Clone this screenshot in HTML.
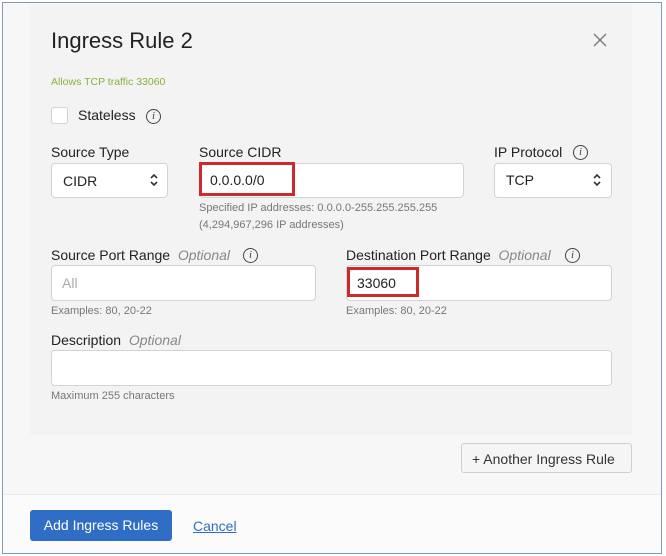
<!DOCTYPE html>
<html><head><style>
*{margin:0;padding:0;box-sizing:border-box}
body{width:666px;height:556px;background:#fff;font-family:"Liberation Sans",sans-serif;position:relative;overflow:hidden;color:#222}
.a{position:absolute;white-space:nowrap}
.frame{position:absolute;left:2px;top:2px;width:660px;height:552px;border:1px solid #8597b8;background:#f7f7f7}
.card{position:absolute;left:30px;top:5px;width:602px;height:430px;background:#f3f3f3}
.foot{position:absolute;left:3px;top:494px;width:658px;height:59px;background:#fbfbfb;border-top:1px solid #e9e9e9}
.in{position:absolute;background:#fff;border:1px solid #d3d3d3;border-radius:4px}
.lbl{font-size:14px;color:#222}
.opt{font-style:italic;color:#888}
.help{font-size:11px;color:#777}
.info{position:absolute;width:15px;height:15px;border:1.2px solid #444;border-radius:50%;font-size:10px;font-style:italic;font-family:"Liberation Serif",serif;text-align:center;line-height:13px;color:#333}
.red{position:absolute;border:3px solid #cc2a2e}
</style></head><body>
<div class="frame"></div>
<div class="card"></div>
<div class="foot"></div>

<div class="a" style="left:51px;top:28px;font-size:22px;color:#222">Ingress Rule 2</div>
<svg class="a" style="left:593px;top:33px" width="14" height="14"><path d="M1 1L13 13M13 1L1 13" stroke="#777" stroke-width="1.3"/></svg>
<div class="a" style="left:51px;top:76px;font-size:10.5px;color:#86b33f">Allows TCP traffic 33060</div>

<div class="in" style="left:51px;top:107px;width:17px;height:17px;border-radius:3px"></div>
<div class="a lbl" style="left:78px;top:107px">Stateless</div>
<div class="info" style="left:146px;top:109px">i</div>

<div class="a lbl" style="left:51px;top:144px">Source Type</div>
<div class="a lbl" style="left:199px;top:144px">Source CIDR</div>
<div class="a lbl" style="left:494px;top:144px">IP Protocol</div>
<div class="info" style="left:573px;top:145px">i</div>

<div class="in" style="left:51px;top:163px;width:117px;height:35px"></div>
<div class="a" style="left:63px;top:173px;font-size:14px">CIDR</div>
<svg class="a" style="left:149px;top:172px" width="10" height="16"><path d="M2 6L5 3L8 6M2 10L5 13L8 10" stroke="#333" stroke-width="1.6" fill="none"/></svg>
<div class="in" style="left:199px;top:163px;width:265px;height:35px"></div>
<div class="red" style="left:199px;top:162px;width:96px;height:34px"></div>
<div class="a" style="left:210px;top:172px;font-size:14px">0.0.0.0/0</div>
<div class="in" style="left:494px;top:163px;width:118px;height:35px"></div>
<div class="a" style="left:506px;top:172px;font-size:14px">TCP</div>
<svg class="a" style="left:592px;top:172px" width="10" height="16"><path d="M2 6L5 3L8 6M2 10L5 13L8 10" stroke="#333" stroke-width="1.6" fill="none"/></svg>
<div class="a help" style="left:199px;top:202px">Specified IP addresses: 0.0.0.0-255.255.255.255</div>
<div class="a help" style="left:199px;top:219px">(4,294,967,296 IP addresses)</div>

<div class="a lbl" style="left:51px;top:247px">Source Port Range&nbsp; <span class="opt">Optional</span></div>
<div class="info" style="left:243px;top:248px">i</div>
<div class="a lbl" style="left:346px;top:247px">Destination Port Range&nbsp; <span class="opt">Optional</span></div>
<div class="info" style="left:565px;top:248px">i</div>

<div class="in" style="left:51px;top:265px;width:265px;height:36px"></div>
<div class="a" style="left:62px;top:275px;font-size:14px;color:#aaa">All</div>
<div class="in" style="left:346px;top:265px;width:266px;height:36px"></div>
<div class="red" style="left:347px;top:267px;width:72px;height:30px"></div>
<div class="a" style="left:357px;top:275px;font-size:14px">33060</div>
<div class="a help" style="left:51px;top:305px">Examples: 80, 20-22</div>
<div class="a help" style="left:346px;top:305px">Examples: 80, 20-22</div>

<div class="a lbl" style="left:51px;top:332px">Description&nbsp; <span class="opt">Optional</span></div>
<div class="in" style="left:51px;top:350px;width:561px;height:36px"></div>
<div class="a help" style="left:51px;top:390px">Maximum 255 characters</div>

<div class="in" style="left:461px;top:443px;width:171px;height:30px;background:#f5f5f5;border-color:#cfcfcf;border-radius:3px"></div>
<div class="a" style="left:472px;top:451px;font-size:14px;color:#333">+ Another Ingress Rule</div>

<div class="a" style="left:30px;top:510px;width:142px;height:31px;background:#2f6ec4;border-radius:3px;color:#fff;font-size:14px;text-align:center;line-height:31px">Add Ingress Rules</div>
<div class="a" style="left:193px;top:518px;font-size:14px;color:#2d6ec4;text-decoration:underline">Cancel</div>
</body></html>
